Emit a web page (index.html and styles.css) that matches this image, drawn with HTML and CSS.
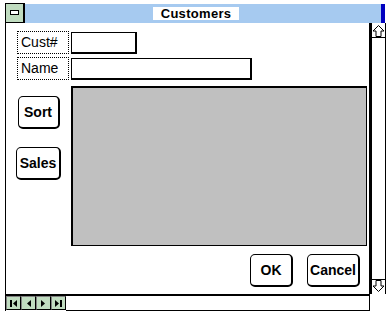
FILE: index.html
```html
<!DOCTYPE html>
<html lang="en">
<head>
    <meta charset="UTF-8">
    <title>Customers</title>
    <link rel="stylesheet" href="styles.css">
</head>
<body>
    <div id="window">
        <div id="titleBar">
            <div class="sys-box"><span class="sys-bar"></span></div>
            <div class="caption"><span class="caption-text">Customers</span></div>
        </div>

        <div id="client">
            <div id="form">
                <div class="field">
                    <div class="field-label">Cust#</div>
                    <div class="field-input short"></div>
                </div>
                <div class="field">
                    <div class="field-label">Name</div>
                    <div class="field-input long"></div>
                </div>

                <div class="form-body">
                    <div class="side-buttons">
                        <button class="win-btn sort">Sort</button>
                        <button class="win-btn sales">Sales</button>
                    </div>
                    <div class="data-grid"></div>
                </div>

                <div class="actions">
                    <button class="win-btn ok">OK</button>
                    <button class="win-btn cancel">Cancel</button>
                </div>
            </div>

            <div id="vScroll">
                <div class="arrow-btn up">
                    <svg width="13" height="12" viewBox="0 0 13 12"><path d="M6.5 0.5 L12 6 L9 6 L9 11.5 L4 11.5 L4 6 L1 6 Z" fill="#fff" stroke="#000"/></svg>
                </div>
                <div class="v-track"></div>
                <div class="arrow-btn down">
                    <svg width="13" height="12" viewBox="0 0 13 12"><path d="M6.5 11.5 L12 6 L9 6 L9 0.5 L4 0.5 L4 6 L1 6 Z" fill="#fff" stroke="#000"/></svg>
                </div>
            </div>
        </div>

        <div id="hScroll">
            <div class="nav-btn">
                <svg width="9" height="9" viewBox="0 0 9 9"><rect x="1" y="1" width="2" height="7"/><path d="M8 1 L4 4.5 L8 8 Z"/></svg>
            </div>
            <div class="nav-btn">
                <svg width="9" height="9" viewBox="0 0 9 9"><path d="M7 1 L3 4.5 L7 8 Z"/></svg>
            </div>
            <div class="nav-btn">
                <svg width="9" height="9" viewBox="0 0 9 9"><path d="M2 1 L6 4.5 L2 8 Z"/></svg>
            </div>
            <div class="nav-btn">
                <svg width="9" height="9" viewBox="0 0 9 9"><path d="M1 1 L5 4.5 L1 8 Z"/><rect x="6" y="1" width="2" height="7"/></svg>
            </div>
            <div class="h-track"></div>
        </div>
    </div>
</body>
</html>
```

FILE: styles.css
```css
* {
    margin: 0;
    padding: 0;
    box-sizing: border-box;
}

body {
    background: #fff;
    color: #000;
    font-family: 'Liberation Sans', Arial, sans-serif;
    width: 388px;
    height: 316px;
    overflow: hidden;
}

#window {
    display: flex;
    flex-direction: column;
    height: 316px;
    padding-top: 3px;
}

/* title bar */
#titleBar {
    display: flex;
    height: 20px;
    padding-left: 5px;
    padding-right: 3px;
}

.sys-box {
    width: 20px;
    height: 20px;
    background: #c0dcc0;
    border: 1px solid #000;
    border-width: 1px 2px 1px 1px;
    display: flex;
    align-items: center;
    justify-content: center;
}

.sys-bar {
    display: block;
    width: 9px;
    height: 5px;
    background: #fff;
    border: 1px solid #000;
    margin-top: -2px;
}

.caption {
    flex: 1;
    height: 19px;
    margin-top: 1px;
    background: #a6caf0;
    border-right: 4px solid #0000c0;
    display: flex;
    align-items: center;
    justify-content: center;
    padding-right: 14px;
}

.caption-text {
    background: #fff;
    font-weight: bold;
    font-size: 13px;
    line-height: 13px;
    padding: 0 8px;
    letter-spacing: 0.3px;
}

/* client area */
#client {
    display: flex;
    height: 271px;
    margin-left: 5px;
    border-left: 1px solid #000;
}

#form {
    width: 363px;
    padding-top: 8px;
    display: flex;
    flex-direction: column;
}

.field {
    display: flex;
    gap: 2px;
    margin-left: 11px;
    margin-bottom: 3px;
}

.field-label {
    width: 52px;
    height: 23px;
    border: 1px dotted #000;
    font-size: 14px;
    line-height: 20px;
    padding-left: 3px;
}

.field-input {
    height: 22px;
    border: 1px solid #000;
    border-width: 1px 2px 2px 1px;
    margin-top: 1px;
}

.field-input.short {
    width: 66px;
}

.field-input.long {
    width: 181px;
}

.form-body {
    display: flex;
    margin-top: 3px;
}

.side-buttons {
    width: 65px;
    display: flex;
    flex-direction: column;
    align-items: center;
    gap: 18px;
    padding-top: 10px;
}

.data-grid {
    width: 296px;
    height: 160px;
    background: #c0c0c0;
    border: 1px solid #000;
    border-width: 2px 1px 1px 2px;
}

.win-btn {
    background: #fff;
    border: 1px solid #000;
    border-width: 1px 2px 2px 1px;
    border-radius: 5px;
    font-family: 'Liberation Sans', Arial, sans-serif;
    font-weight: bold;
    font-size: 14px;
    height: 33px;
    color: #000;
}

.win-btn.sort {
    width: 42px;
}

.win-btn.sales {
    width: 45px;
}

.actions {
    display: flex;
    justify-content: flex-end;
    gap: 14px;
    margin-top: 8px;
    padding-right: 9px;
}

.win-btn.ok {
    width: 43px;
}

.win-btn.cancel {
    width: 53px;
}

/* vertical scroll bar */
#vScroll {
    width: 17px;
    border-left: 3px solid #000;
    border-right: 1px solid #000;
    display: flex;
    flex-direction: column;
    padding-top: 2px;
}

.arrow-btn {
    height: 13px;
    display: flex;
    justify-content: center;
    align-items: center;
}

.arrow-btn.up {
    border-bottom: 1px solid #000;
}

.arrow-btn.down {
    border-top: 1px solid #000;
    margin-bottom: 2px;
}

.v-track {
    flex: 1;
}

/* record navigator */
#hScroll {
    display: flex;
    margin-left: 5px;
    width: 365px;
    height: 17px;
    border-top: 2px solid #000;
    border-left: 1px solid #000;
}

.nav-btn {
    width: 15px;
    height: 14px;
    background: #c0dcc0;
    border: 1px solid #808080;
    border-right-color: #000;
    border-bottom-color: #000;
    display: flex;
    justify-content: center;
    align-items: center;
}

.h-track {
    flex: 1;
    border-bottom: 1px solid #000;
    border-right: 1px solid #000;
}
```
